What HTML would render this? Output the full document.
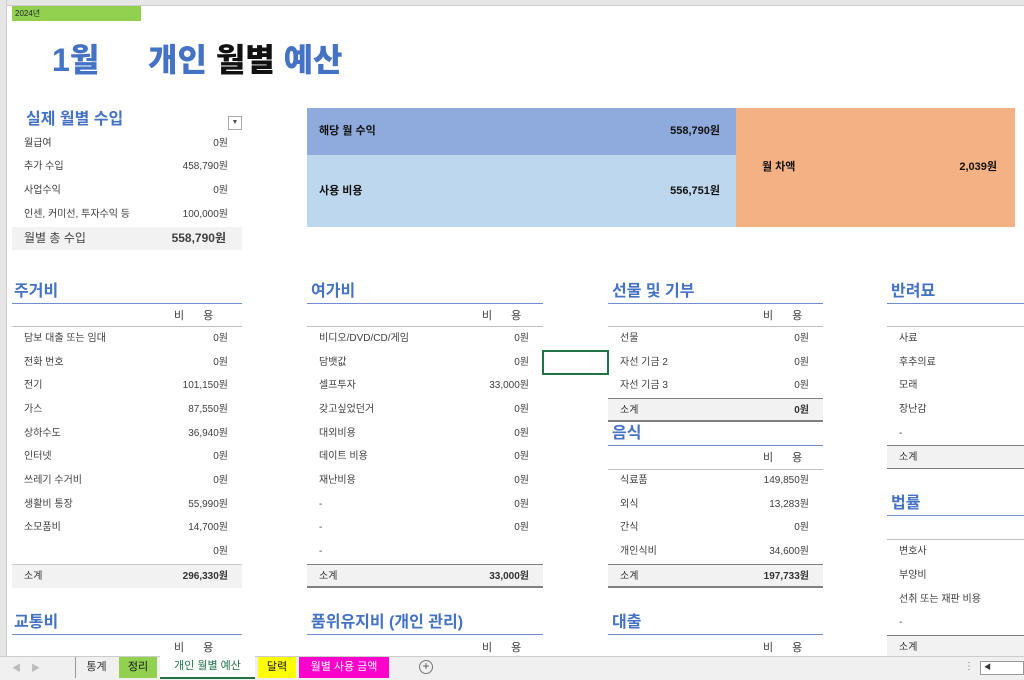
<!DOCTYPE html>
<html><head><meta charset="utf-8"><style>
*{margin:0;padding:0;box-sizing:border-box}
body{width:1024px;height:680px;overflow:hidden;background:#fff;font-family:"Liberation Sans","Noto Sans CJK KR",sans-serif;position:relative;color:#333}
.a{position:absolute;white-space:nowrap}
.r{position:absolute;height:16px;font-size:10px;line-height:16px;color:#404040}
.r span{position:absolute;right:0;top:0}
.h{position:absolute;font-size:16px;font-weight:bold;color:#4472c4;line-height:20px}
.ul{position:absolute;height:1px;background:#6f8fcf}
.gl{position:absolute;height:1px;background:#bfbfbf}
.st{position:absolute;height:24px;background:#f2f2f2;font-size:10px;line-height:24px;color:#333;border-top:1px solid #808080}
.st b{position:absolute;right:14px;top:0}
.by{position:absolute;font-size:11px;color:#404040;letter-spacing:8px}
</style></head><body>
<div class="a" style="left:0;top:0;width:1024px;height:6px;background:#e6e6e6;border-bottom:1px solid #ccc"></div>
<div class="a" style="left:0;top:0;width:7px;height:656px;background:#e6e6e6;border-right:1px solid #ccc"></div>
<div class="a" style="left:12px;top:6px;width:129px;height:15px;background:#92d050;font-size:8px;line-height:15px;padding-left:3px;color:#222">2024년</div>
<div class="a" style="left:52px;top:39px;font-size:32px;font-weight:900;color:#4472c4;line-height:42px">1월</div>
<div class="a" style="left:148px;top:39px;font-size:32px;font-weight:900;color:#4472c4;line-height:42px">개인 <span style="color:#111">월별</span> 예산</div>
<div class="a" style="left:26px;top:109px;font-size:16px;color:#4472c4;line-height:22px;font-weight:bold">실제 월별 수입</div>
<div class="a" style="left:228px;top:116px;width:14px;height:14px;border:1px solid #aaa;background:#fff;font-size:7px;text-align:center;line-height:12px;color:#555">▼</div>
<div class="r" style="left:24px;top:136px;width:204px">월급여<span>0원</span></div>
<div class="r" style="left:24px;top:159px;width:204px">추가 수입<span>458,790원</span></div>
<div class="r" style="left:24px;top:183px;width:204px">사업수익<span>0원</span></div>
<div class="r" style="left:24px;top:207px;width:204px">인센, 커미선, 투자수익 등<span>100,000원</span></div>
<div class="a" style="left:12px;top:227px;width:230px;height:23px;background:#f2f2f2;font-size:12px;line-height:23px;padding-left:12px;color:#404040">월별 총 수입<b style="position:absolute;right:16px">558,790원</b></div>
<div class="a" style="left:307px;top:108px;width:429px;height:47px;background:#8faadc;font-size:11px;line-height:47px;padding-left:12px;color:#111;font-weight:bold">해당 월 수익<span style="position:absolute;right:16px">558,790원</span></div>
<div class="a" style="left:307px;top:155px;width:429px;height:72px;background:#bdd7ee;font-size:11px;line-height:72px;padding-left:12px;color:#111;font-weight:bold">사용 비용<span style="position:absolute;right:16px">556,751원</span></div>
<div class="a" style="left:736px;top:108px;width:279px;height:119px;background:#f4b183;font-size:11px;line-height:119px;padding-left:26px;color:#111;font-weight:bold">월 차액<span style="position:absolute;right:18px">2,039원</span></div>

<div class="h" style="left:14px;top:282px">주거비</div>
<div class="ul" style="left:12px;top:303px;width:230px"></div>
<div class="by" style="left:174px;top:307px">비 용</div>
<div class="gl" style="left:12px;top:326px;width:230px"></div>
<div class="r" style="left:24px;top:331px;width:204px">담보 대출 또는 임대<span>0원</span></div>
<div class="r" style="left:24px;top:355px;width:204px">전화 번호<span>0원</span></div>
<div class="r" style="left:24px;top:378px;width:204px">전기<span>101,150원</span></div>
<div class="r" style="left:24px;top:402px;width:204px">가스<span>87,550원</span></div>
<div class="r" style="left:24px;top:426px;width:204px">상하수도<span>36,940원</span></div>
<div class="r" style="left:24px;top:449px;width:204px">인터넷<span>0원</span></div>
<div class="r" style="left:24px;top:473px;width:204px">쓰레기 수거비<span>0원</span></div>
<div class="r" style="left:24px;top:497px;width:204px">생활비 통장<span>55,990원</span></div>
<div class="r" style="left:24px;top:520px;width:204px">소모품비<span>14,700원</span></div>
<div class="r" style="left:24px;top:544px;width:204px"><span>0원</span></div>
<div class="st" style="left:12px;top:564px;width:230px;padding-left:12px;border-top-color:#ccc">소계<b>296,330원</b></div>
<div class="h" style="left:14px;top:613px">교통비</div>
<div class="ul" style="left:12px;top:634px;width:230px"></div>
<div class="by" style="left:174px;top:639px">비 용</div>

<div class="h" style="left:311px;top:282px">여가비</div>
<div class="ul" style="left:307px;top:303px;width:236px"></div>
<div class="by" style="left:482px;top:307px">비 용</div>
<div class="gl" style="left:307px;top:326px;width:236px"></div>
<div class="r" style="left:319px;top:331px;width:210px">비디오/DVD/CD/게임<span>0원</span></div>
<div class="r" style="left:319px;top:355px;width:210px">담뱃값<span>0원</span></div>
<div class="r" style="left:319px;top:378px;width:210px">셀프투자<span>33,000원</span></div>
<div class="r" style="left:319px;top:402px;width:210px">갖고싶었던거<span>0원</span></div>
<div class="r" style="left:319px;top:426px;width:210px">대외비용<span>0원</span></div>
<div class="r" style="left:319px;top:449px;width:210px">데이트 비용<span>0원</span></div>
<div class="r" style="left:319px;top:473px;width:210px">재난비용<span>0원</span></div>
<div class="r" style="left:319px;top:497px;width:210px">-<span>0원</span></div>
<div class="r" style="left:319px;top:520px;width:210px">-<span>0원</span></div>
<div class="r" style="left:319px;top:544px;width:210px">-</div>
<div class="st" style="left:307px;top:564px;width:236px;padding-left:12px;border-bottom:2px solid #808080">소계<b>33,000원</b></div>
<div class="h" style="left:311px;top:613px">품위유지비 (개인 관리)</div>
<div class="ul" style="left:307px;top:634px;width:236px"></div>
<div class="by" style="left:482px;top:639px">비 용</div>
<div class="a" style="left:542px;top:350px;width:67px;height:25px;border:2px solid #217346"></div>

<div class="h" style="left:612px;top:282px">선물 및 기부</div>
<div class="ul" style="left:608px;top:303px;width:215px"></div>
<div class="by" style="left:763px;top:307px">비 용</div>
<div class="gl" style="left:608px;top:326px;width:215px"></div>
<div class="r" style="left:620px;top:331px;width:189px">선물<span>0원</span></div>
<div class="r" style="left:620px;top:355px;width:189px">자선 기금 2<span>0원</span></div>
<div class="r" style="left:620px;top:378px;width:189px">자선 기금 3<span>0원</span></div>
<div class="st" style="left:608px;top:398px;width:215px;padding-left:12px;border-bottom:2px solid #808080">소계<b>0원</b></div>
<div class="h" style="left:612px;top:424px">음식</div>
<div class="ul" style="left:608px;top:445px;width:215px"></div>
<div class="by" style="left:763px;top:449px">비 용</div>
<div class="gl" style="left:608px;top:469px;width:215px"></div>
<div class="r" style="left:620px;top:473px;width:189px">식료품<span>149,850원</span></div>
<div class="r" style="left:620px;top:497px;width:189px">외식<span>13,283원</span></div>
<div class="r" style="left:620px;top:520px;width:189px">간식<span>0원</span></div>
<div class="r" style="left:620px;top:544px;width:189px">개인식비<span>34,600원</span></div>
<div class="st" style="left:608px;top:564px;width:215px;padding-left:12px;border-bottom:2px solid #808080">소계<b>197,733원</b></div>
<div class="h" style="left:612px;top:613px">대출</div>
<div class="ul" style="left:608px;top:634px;width:215px"></div>
<div class="by" style="left:763px;top:639px">비 용</div>

<div class="h" style="left:891px;top:282px">반려묘</div>
<div class="ul" style="left:887px;top:303px;width:137px"></div>
<div class="gl" style="left:887px;top:326px;width:137px"></div>
<div class="r" style="left:899px;top:331px;width:120px">사료</div>
<div class="r" style="left:899px;top:355px;width:120px">후추의료</div>
<div class="r" style="left:899px;top:378px;width:120px">모래</div>
<div class="r" style="left:899px;top:402px;width:120px">장난감</div>
<div class="r" style="left:899px;top:426px;width:120px">-</div>
<div class="st" style="left:887px;top:445px;width:137px;padding-left:12px;border-bottom:1px solid #808080">소계</div>
<div class="h" style="left:891px;top:494px">법률</div>
<div class="ul" style="left:887px;top:515px;width:137px"></div>
<div class="gl" style="left:887px;top:539px;width:137px"></div>
<div class="r" style="left:899px;top:544px;width:120px">변호사</div>
<div class="r" style="left:899px;top:568px;width:120px">부양비</div>
<div class="r" style="left:899px;top:592px;width:120px">선취 또는 재판 비용</div>
<div class="r" style="left:899px;top:615px;width:120px">-</div>
<div class="st" style="left:887px;top:635px;width:137px;padding-left:12px">소계</div>

<div class="a" style="left:0;top:656px;width:1024px;height:24px;background:#f0f0f0;border-top:1px solid #ccc"></div>
<div class="a" style="left:12px;top:661px;font-size:9px;color:#bbb">◀&nbsp;&nbsp;&nbsp;&nbsp;▶</div>
<div class="a" style="left:75px;top:657px;width:42px;height:21px;font-size:11px;line-height:20px;text-align:center;color:#333;border-left:1px solid #999">통계</div>
<div class="a" style="left:119px;top:657px;width:38px;height:21px;background:#92d050;font-size:11px;line-height:20px;text-align:center;color:#111">정리</div>
<div class="a" style="left:160px;top:656px;width:95px;height:23px;background:#fff;border-bottom:2px solid #217346;font-size:11px;line-height:21px;text-align:center;color:#217346">개인 월별 예산</div>
<div class="a" style="left:258px;top:657px;width:38px;height:21px;background:#ffff00;font-size:11px;line-height:20px;text-align:center;color:#111">달력</div>
<div class="a" style="left:299px;top:657px;width:90px;height:21px;background:#ff00cc;font-size:11px;line-height:20px;text-align:center;color:#fff">월별 사용 금액</div>
<div class="a" style="left:419px;top:660px;width:14px;height:14px;border:1px solid #777;border-radius:50%;font-size:12px;line-height:11px;text-align:center;color:#555">+</div>
<div class="a" style="left:964px;top:661px;font-size:10px;color:#777">⋮</div>
<div class="a" style="left:980px;top:661px;width:44px;height:14px;border:1px solid #999;background:#fff;font-size:7px;line-height:12px;padding-left:3px">◀</div>
</body></html>
